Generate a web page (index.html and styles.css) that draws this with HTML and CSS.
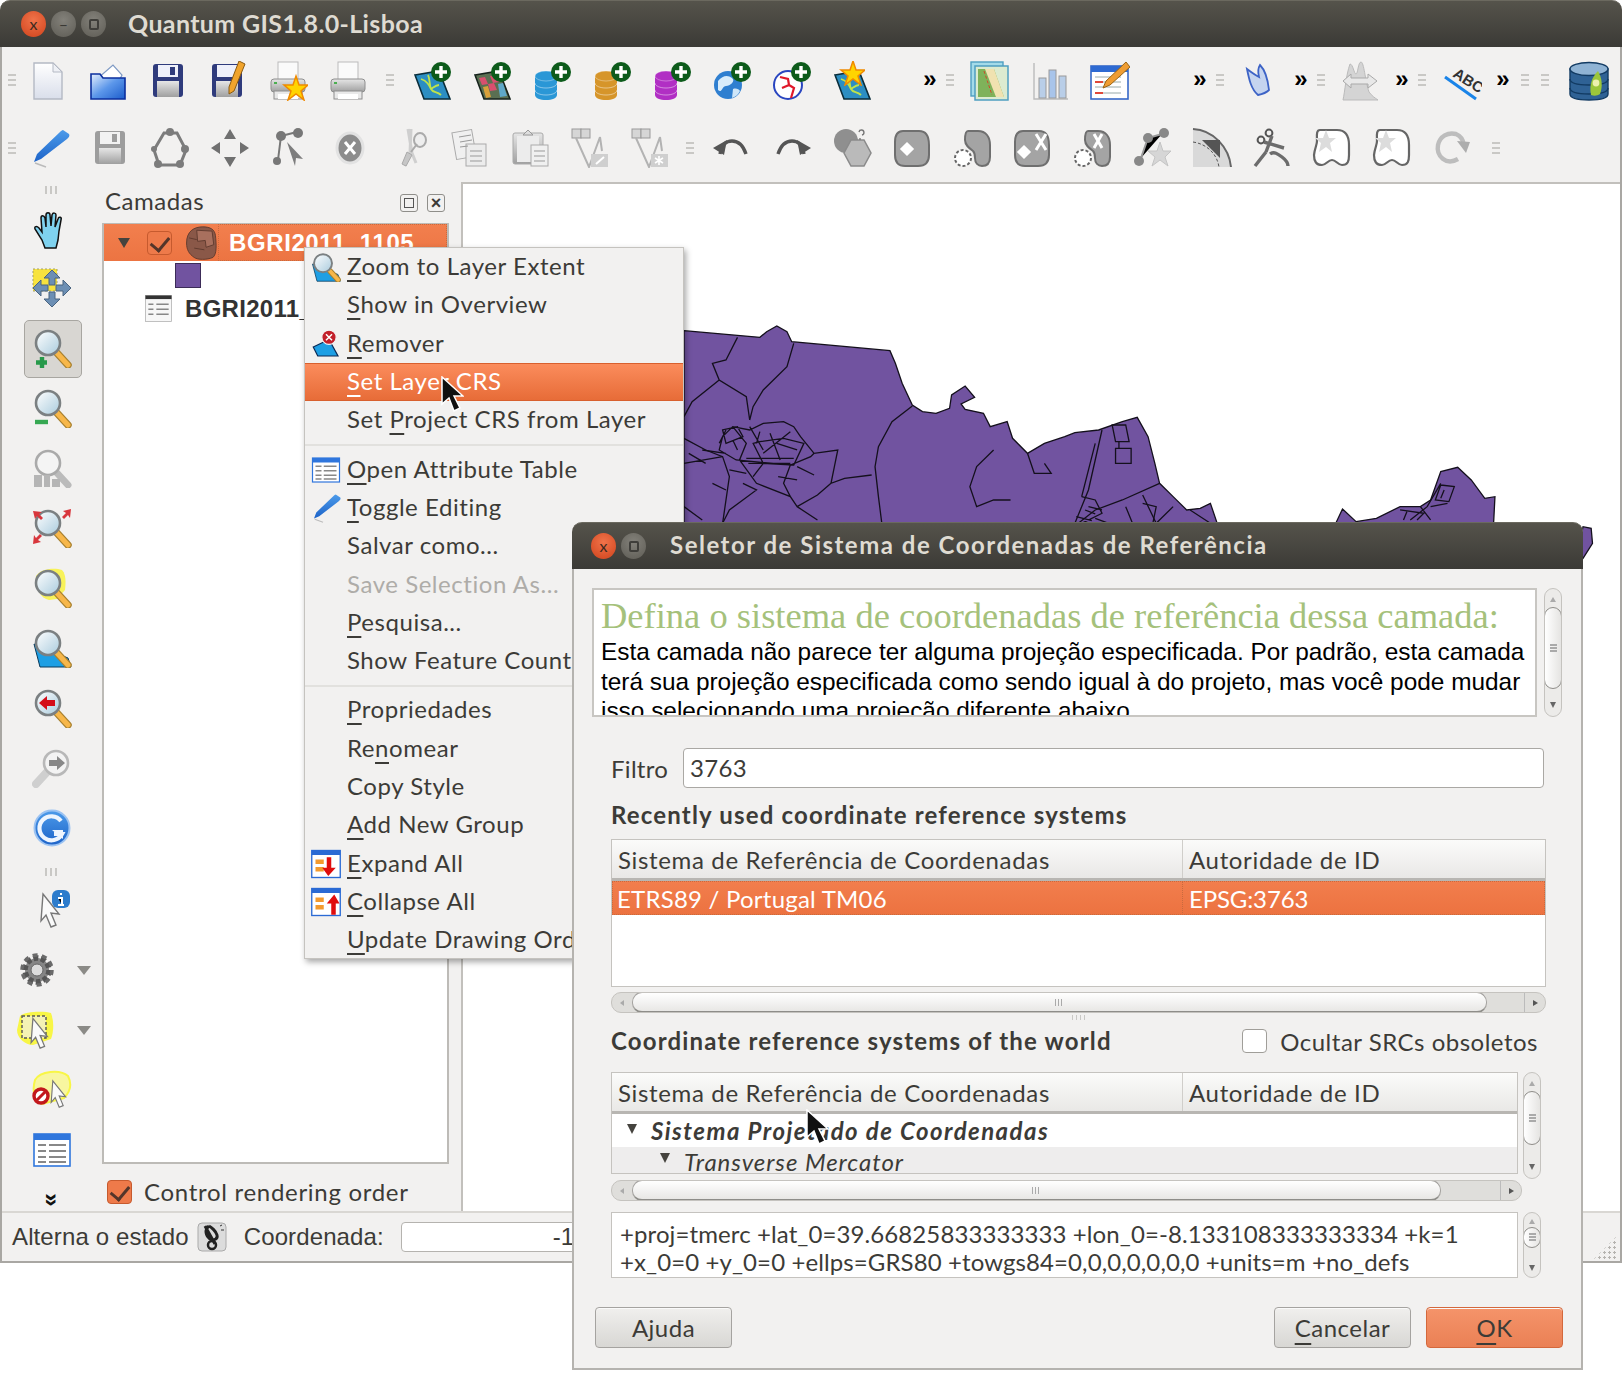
FILE: index.html
```html
<!DOCTYPE html>
<html lang="pt">
<head>
<meta charset="utf-8">
<title>Quantum GIS 1.8.0-Lisboa</title>
<link rel="stylesheet" href="styles.css">
</head>
<body>
<svg class="sprite" width="0" height="0" aria-hidden="true">
<defs>
<linearGradient id="gDoc" x1="0" y1="0" x2="0" y2="1"><stop offset="0" stop-color="#fff"/><stop offset="1" stop-color="#d9deea"/></linearGradient>
<linearGradient id="gFolder" x1="0" y1="0" x2="1" y2="1"><stop offset="0" stop-color="#e6f0fd"/><stop offset=".5" stop-color="#5c97ea"/><stop offset="1" stop-color="#1b5ccb"/></linearGradient>
<linearGradient id="gGrey" x1="0" y1="0" x2="0" y2="1"><stop offset="0" stop-color="#e6e6e6"/><stop offset="1" stop-color="#9f9f9f"/></linearGradient>
<linearGradient id="gMag" x1="0" y1="0" x2="1" y2="1"><stop offset="0" stop-color="#fff"/><stop offset="1" stop-color="#a9cbdd"/></linearGradient>
<linearGradient id="gBlue" x1="0" y1="0" x2="0" y2="1"><stop offset="0" stop-color="#4c9bea"/><stop offset="1" stop-color="#1d63c8"/></linearGradient>
<symbol id="badge" viewBox="0 0 40 40"><circle cx="29" cy="11" r="10" fill="#0d5b1b"/><path d="M29 5v12M23 11h12" stroke="#fff" stroke-width="3.4"/></symbol>
<symbol id="db" viewBox="0 0 40 40"><path d="M3 15v19c0 3 5 5 11 5s11-2 11-5V15z" fill="currentColor"/><ellipse cx="14" cy="15" rx="11" ry="5" fill="currentColor" stroke="#fff" stroke-opacity=".35"/><path d="M3 22c0 3 5 5 11 5s11-2 11-5M3 29c0 3 5 5 11 5s11-2 11-5" fill="none" stroke="#fff" stroke-opacity=".45"/></symbol>
<symbol id="mag" viewBox="0 0 40 40"><path d="M25 25l11 12" stroke="#a8812f" stroke-width="7.5" stroke-linecap="round"/><path d="M25 25l11 12" stroke="#f7b74a" stroke-width="5" stroke-linecap="round"/><circle cx="16" cy="15" r="12" fill="url(#gMag)" stroke="#7b8082" stroke-width="2.6"/></symbol>
<symbol id="magG" viewBox="0 0 40 40"><path d="M25 25l11 12" stroke="#bbb" stroke-width="7" stroke-linecap="round"/><circle cx="16" cy="15" r="12" fill="#f4f4f4" stroke="#aaa" stroke-width="2.6"/></symbol>
<symbol id="new" viewBox="0 0 40 40"><path d="M6 2h19l9 9v27H6z" fill="url(#gDoc)" stroke="#b4b9c4" stroke-width="1.4"/><path d="M25 2v9h9z" fill="#eef0f5" stroke="#b4b9c4"/></symbol>
<symbol id="open" viewBox="0 0 40 40"><path d="M9 18L25 4l9 10-3 6z" fill="#fff" stroke="#7f9ac4" stroke-width="1.2"/><path d="M3 13h9l3 4h22v21H3z" fill="url(#gFolder)" stroke="#0b2f9e" stroke-width="1.6"/></symbol>
<symbol id="save" viewBox="0 0 40 40"><rect x="5" y="3" width="30" height="33" rx="3" fill="#2f3b7c"/><rect x="10" y="4" width="20" height="12" fill="#eef0fa"/><rect x="22" y="6" width="5" height="8" fill="#2f3b7c"/><rect x="9" y="20" width="22" height="16" fill="url(#gGrey)"/></symbol>
<symbol id="saveas" viewBox="0 0 40 40"><rect x="4" y="3" width="30" height="33" rx="3" fill="#2f3b7c"/><rect x="9" y="4" width="20" height="12" fill="#eef0fa"/><rect x="8" y="20" width="22" height="16" fill="url(#gGrey)"/><path d="M31 0l6 3-11 27-5 3 0-7z" fill="#f1a42c" stroke="#8a5a10"/></symbol>
<symbol id="save2" viewBox="0 0 40 40"><rect x="5" y="3" width="30" height="33" rx="3" fill="#9d9d9d"/><rect x="10" y="4" width="20" height="12" fill="#f2f2f2"/><rect x="22" y="6" width="5" height="8" fill="#9d9d9d"/><rect x="9" y="20" width="22" height="16" fill="url(#gGrey)"/></symbol>
<symbol id="printer" viewBox="0 0 40 40"><rect x="10" y="1" width="20" height="18" fill="#fafafa" stroke="#bbb"/><rect x="3" y="18" width="34" height="13" rx="3" fill="url(#gGrey)" stroke="#8e8e8e"/><rect x="6" y="30" width="28" height="8" fill="#e9e9e9" stroke="#8e8e8e"/><rect x="10" y="33" width="20" height="5" fill="#fff"/><rect x="6" y="21" width="3" height="2" fill="#4caf50"/></symbol>
<symbol id="star" viewBox="0 0 40 40"><path d="M28 15l3 9h9l-7 6 3 9-8-6-8 6 3-9-7-6h9z" fill="#ffd400" stroke="#f08a00" stroke-width="1.5"/></symbol>
<symbol id="vec" viewBox="0 0 40 40"><path d="M3 14l24-4 11 28H12z" fill="#2c8ec2" stroke="#0a2d3a" stroke-width="1.6"/><path d="M9 18c6 2 8 6 10 10s6 2 10 6M16 14c2 4 1 8 3 14M27 24c-3 0-5 2-8 4" fill="none" stroke="#bfe34a" stroke-width="1.8"/></symbol>
<symbol id="rast" viewBox="0 0 40 40"><path d="M3 14l24-4 11 28H12z" fill="#5a6f52" stroke="#16221c" stroke-width="1.6"/><path d="M7 17l6-1 3 7-6 1zM16 23l6-1 3 7-7 1zM18 15l6-1 3 7-6 1z" fill="#d84f6e"/><path d="M11 26l5-1 3 11-5 1z" fill="#d9a13a"/><path d="M26 23l5-1 4 13-7 1z" fill="#5fa8c9"/></symbol>
<symbol id="globe" viewBox="0 0 40 40"><circle cx="16" cy="24" r="14" fill="#2f7fd0"/><path d="M6 20c5-6 10-6 14-3s-2 8-6 8-4 8-8 4z" fill="#d9ecfa"/><path d="M21 28c3-1 6 0 7 2-2 4-5 6-8 7z" fill="#cfe6f8"/></symbol>
<symbol id="globe2" viewBox="0 0 40 40"><circle cx="16" cy="24" r="14" fill="#fff" stroke="#2a46c0" stroke-width="2"/><path d="M8 16l8 2 1 6 5 3-3 10M17 24l-7 3" fill="none" stroke="#e0182a" stroke-width="2.2"/></symbol>
<symbol id="atlas" viewBox="0 0 40 40"><rect x="1" y="1" width="32" height="34" fill="#a4dbe9" stroke="#4f9fc0" stroke-width="1.4"/><rect x="5" y="5" width="33" height="34" fill="#dcebd0" stroke="#4f9fc0" stroke-width="1.5"/><path d="M8 8h16l10 28H8z" fill="#7fb25a"/><path d="M15 8h9l10 28H26z" fill="#f0e2b0"/><path d="M14 10l8 24" stroke="#cf4a2a" stroke-dasharray="3 2"/></symbol>
<symbol id="chart" viewBox="0 0 40 40"><path d="M4 2v36h34" fill="none" stroke="#bbb" stroke-width="1.4"/><rect x="9" y="17" width="7" height="20" fill="#b9cee8" stroke="#9a9a9a"/><rect x="19" y="9" width="7" height="28" fill="#a8c4ea" stroke="#9a9a9a"/><rect x="29" y="15" width="7" height="22" fill="#b9cee8" stroke="#9a9a9a"/></symbol>
<symbol id="notes" viewBox="0 0 40 40"><rect x="1" y="5" width="37" height="33" fill="#fff" stroke="#3668c8" stroke-width="1.6"/><rect x="1" y="5" width="37" height="6" fill="#2e6ad2"/><path d="M5 16h26M5 21h26M5 26h26M5 32h26" stroke="#9aa"/><path d="M5 21h8M5 32h8" stroke="#e0483a" stroke-width="2"/><path d="M36 1l4 5-20 18-7 3 3-7z" fill="#ef9d33" stroke="#9a6414"/></symbol>
<symbol id="book" viewBox="0 0 40 40"><path d="M7 8c2 10 4 20 11 26 5-1 8-2 11-5-1-9-4-20-9-25-2 3-2 8-1 12-4-2-8-5-12-8z" fill="#c5d4ef" stroke="#3d63c6" stroke-width="1.8"/></symbol>
<symbol id="hist" viewBox="0 0 40 40"><path d="M2 39C4 30 5 14 9 3c3 0 4 10 6 10s2-12 5-12c3 0 4 18 8 30 3 4 6 6 9 8z" fill="#d4d4d4" stroke="#bbb"/><path d="M2 20l8-7v4h17v-4l9 7-9 7v-4H10v4z" fill="#e8e8e8" stroke="#a9a9a9"/></symbol>
<symbol id="abc" viewBox="0 0 40 40"><text x="10" y="15" transform="rotate(33 10 15)" font-family="Liberation Sans" font-weight="700" font-size="15" fill="#333">ABC</text><path d="M3 16l31 22" stroke="#1a84e8" stroke-width="3"/></symbol>
<symbol id="qdb" viewBox="0 0 40 40"><path d="M1 8v25c0 4 8 6 19 6s19-2 19-6V8z" fill="#2f6295" stroke="#123b63" stroke-width="1.4"/><ellipse cx="20" cy="8" rx="19" ry="6.5" fill="#8fb3d4" stroke="#123b63" stroke-width="1.4"/><path d="M1 18c0 4 8 6 19 6s19-2 19-6M1 27c0 4 8 6 19 6s19-2 19-6" fill="none" stroke="#123b63" stroke-width="1.4"/><path d="M29 10c-6 6-9 14-7 24 3 1 6 1 9-1 3-8 2-16-2-23z" fill="#9cc63a"/><circle cx="27" cy="22" r="3.4" fill="#edf0ad"/></symbol>
<symbol id="edit" viewBox="0 0 40 40"><path d="M33 2l6 4c1 2 0 3-2 5L11 31l-7 3 3-8L30 4c1-1 2-2 3-2z" fill="url(#gBlue)"/><path d="M5 35l11 4" stroke="#bbb" stroke-width="1.6"/></symbol>
<symbol id="nodeshape" viewBox="0 0 40 40"><path d="M14 5h13l9 17-6 15H9L4 22z" fill="none" stroke="#7c7c7c" stroke-width="3"/><g fill="#7c7c7c"><circle cx="20" cy="4" r="4"/><circle cx="35" cy="21" r="4"/><circle cx="30" cy="36" r="4"/><circle cx="8" cy="36" r="4"/><circle cx="4" cy="21" r="3"/></g></symbol>
<symbol id="move" viewBox="0 0 40 40"><path d="M20 1l6 10H14zM20 39l-6-10h12zM1 20l9-6v12zM39 20l-9 6V14z" fill="#707070"/></symbol>
<symbol id="nodetool" viewBox="0 0 40 40"><path d="M11 8L8 32M11 8l16-4" stroke="#777" stroke-width="2"/><g fill="#777"><circle cx="11" cy="8" r="5"/><circle cx="28" cy="5" r="5"/><circle cx="7" cy="33" r="4"/></g><path d="M17 14l16 17-7-1-1 8z" fill="#7d7d7d"/></symbol>
<symbol id="del" viewBox="0 0 40 40"><ellipse cx="20" cy="20" rx="13" ry="15" fill="#8c8c8c" stroke="#e2e2e2" stroke-width="3"/><path d="M15 14l10 12M25 14L15 26" stroke="#fff" stroke-width="3"/></symbol>
<symbol id="cut" viewBox="0 0 40 40"><path d="M21 1l-1 24-5 13M18 1l4 24 4 10" fill="none" stroke="#cfcfcf" stroke-width="3"/><ellipse cx="30" cy="12" rx="6" ry="7" fill="#eee" stroke="#aaa" stroke-width="2"/><path d="M21 24l6-8" stroke="#aaa" stroke-width="2"/><path d="M17 24l-5 12 4 2 6-11z" fill="#c6c6c6" stroke="#aaa"/></symbol>
<symbol id="copy" viewBox="0 0 40 40"><rect x="4" y="3" width="20" height="27" fill="#f0f0f0" stroke="#aaa" transform="rotate(-10 14 16)"/><rect x="16" y="16" width="20" height="22" fill="#ececec" stroke="#aaa"/><path d="M9 9l12-2M10 14l12-2M10 19l8-1M20 23h12M20 28h12M20 33h12" stroke="#999"/></symbol>
<symbol id="paste" viewBox="0 0 40 40"><rect x="3" y="5" width="30" height="31" rx="2" fill="url(#gGrey)" stroke="#aaa"/><rect x="7" y="8" width="22" height="26" fill="#ececec"/><path d="M13 7l5-5 5 5z" fill="#ddd" stroke="#999"/><rect x="21" y="17" width="17" height="21" fill="#f0f0f0" stroke="#aaa"/><path d="M24 23h11M24 28h11M24 33h11" stroke="#999"/></symbol>
<symbol id="merge" viewBox="0 0 40 40"><rect x="2" y="1" width="9" height="9" fill="#d6d6d6" stroke="#999"/><rect x="11" y="1" width="9" height="9" fill="#d6d6d6" stroke="#999"/><path d="M6 10l13 29 11-30M30 9l2 14" fill="none" stroke="#b3b3b3" stroke-width="2"/><rect x="21" y="26" width="17" height="13" fill="#cfcfcf"/><path d="M26 36l8-7" stroke="#fff" stroke-width="2"/></symbol>
<symbol id="merge2" viewBox="0 0 40 40"><rect x="2" y="1" width="9" height="9" fill="#d6d6d6" stroke="#999"/><rect x="11" y="1" width="9" height="9" fill="#d6d6d6" stroke="#999"/><path d="M6 10l13 29 11-30M30 9l2 14" fill="none" stroke="#b3b3b3" stroke-width="2"/><rect x="21" y="26" width="17" height="13" fill="#cfcfcf"/><path d="M29 28v9M25 30l8 5M33 30l-8 5" stroke="#fff" stroke-width="1.6"/></symbol>
<symbol id="undo" viewBox="0 0 40 40"><path d="M8 26C10 16 14 13 20 13s11 4 14 13" fill="none" stroke="#555" stroke-width="3.4"/><path d="M1 20l14-8-3 15z" fill="#555"/></symbol>
<symbol id="redo" viewBox="0 0 40 40"><path d="M32 26C30 16 26 13 20 13S9 17 6 26" fill="none" stroke="#555" stroke-width="3.4"/><path d="M39 20l-14-8 3 15z" fill="#555"/></symbol>
<symbol id="blob" viewBox="0 0 40 40"><path d="M11 3h16c8 0 10 6 10 14v10c0 7-4 11-11 11H13C6 38 3 34 3 27V14C3 7 5 3 11 3z" fill="#a4a4a4" stroke="#6f6f6f" stroke-width="2"/></symbol>
<symbol id="multi" viewBox="0 0 40 40"><circle cx="14" cy="13" r="12" fill="#8f8f8f"/><path d="M19 12h13l7 13-7 13H19l-7-13z" fill="#bababa" stroke="#8a8a8a" stroke-width="1.5"/><path d="M27 4a2.5 2.5 0 1 1 3 3M28 10v2" fill="none" stroke="#777" stroke-width="1.4"/></symbol>
<symbol id="ring" viewBox="0 0 40 40"><use href="#blob" width="40" height="40"/><path d="M15 16l5 5-5 5-5-5z" fill="#fff" stroke="#fff" stroke-width="3"/></symbol>
<symbol id="part" viewBox="0 0 40 40"><path d="M16 3h10c8 0 12 6 12 14v12c0 6-3 9-8 9-4 0-7-3-7-8 0-3 0-5-2-7-4-3-8-6-8-11 0-6 1-9 3-9z" fill="#a4a4a4" stroke="#6f6f6f" stroke-width="2"/><circle cx="11" cy="30" r="8" fill="#fff" stroke="#666" stroke-width="2" stroke-dasharray="3 2"/></symbol>
<symbol id="delring" viewBox="0 0 40 40"><use href="#blob" width="40" height="40"/><path d="M24 6l10 16M34 6L24 22" stroke="#fff" stroke-width="3"/><path d="M12 19l5 5-5 5-5-5z" fill="#fff" stroke="#fff" stroke-width="3"/></symbol>
<symbol id="delpart" viewBox="0 0 40 40"><use href="#part" width="40" height="40"/><path d="M22 6l8 14M30 6l-8 14" stroke="#fff" stroke-width="3"/></symbol>
<symbol id="starnode" viewBox="0 0 40 40"><path d="M9 30L16 10l14-4" stroke="#999" stroke-width="2"/><g fill="#888"><circle cx="16" cy="10" r="5"/><circle cx="32" cy="5" r="5"/><circle cx="7" cy="33" r="5"/></g><path d="M28 14l3 9h8l-6 6 3 9-8-6-8 6 3-9-7-6h9z" fill="#d6d6d6" stroke="#c4c4c4"/></symbol>
<symbol id="offset" viewBox="0 0 40 40"><path d="M1 1c20 1 36 18 38 38H1z" fill="#d9d9d9"/><path d="M1 1c20 1 36 18 38 38" fill="none" stroke="#666" stroke-width="2"/><path d="M10 12L28 12v18z" fill="#555"/><path d="M1 14c14 2 24 12 26 25" fill="none" stroke="#555" stroke-dasharray="3 2"/></symbol>
<symbol id="split" viewBox="0 0 40 40"><circle cx="17" cy="5" r="3.4" fill="none" stroke="#555" stroke-width="2"/><circle cx="9" cy="12" r="3.4" fill="none" stroke="#555" stroke-width="2"/><path d="M12 14l20 6M20 8L14 24M14 24L3 38M18 26c4-3 8 0 12 3 4 3 6 6 6 9" fill="none" stroke="#6c6c6c" stroke-width="3.4"/></symbol>
<symbol id="rotstar" viewBox="0 0 40 40"><path d="M8 2h17c9 0 12 7 12 15v10c0 6-1 10-7 10-4 0-6-5-10-5s-6 5-10 5c-6 0-8-4-8-10 1-8 3-10 3-14 0-5-1-11 3-11z" fill="#fff" stroke="#666" stroke-width="2.2"/><path d="M14 2l3 8h7l-6 5 2 9-6-5-7 5 2-9-6-5h8z" fill="#dcdcdc"/></symbol>
<symbol id="rotate" viewBox="0 0 40 40"><path d="M26 31C14 38 4 28 6 17 8 8 16 4 24 6c5 2 7 5 8 11" fill="none" stroke="#bdbdbd" stroke-width="4.4"/><path d="M25 13l13 1-4 11z" fill="#adadad"/></symbol>
<symbol id="hand" viewBox="0 0 40 40"><path d="M13 38l-3-8-7-11c-1-3 2-3 4-1l3 4-1-14c0-3 3-3 4 0l1 9V5c0-3 4-3 4 0l1 11 1-11c1-3 4-2 4 0l-1 12 3-8c1-3 4-2 3 1l-2 11-1 9-2 8z" fill="#7fd2ef" stroke="#111" stroke-width="1.5"/></symbol>
<symbol id="pansel" viewBox="0 0 40 40"><rect x="1" y="1" width="24" height="22" fill="#f7e33e" stroke="#a4a067" stroke-dasharray="2 2"/><g fill="#6c8fb4" stroke="#4a6480"><path d="M20 2l8 8h-5v7h-6v-7h-5zM20 39l8-8h-5v-7h-6v7h-5z"/><path d="M1 20l8-8v5h7v6H9v5zM39 20l-8-8v5h-7v6h7v5z"/></g></symbol>
<symbol id="zin" viewBox="0 0 40 40"><use href="#mag" width="40" height="40"/><path d="M10 29v11M4 34.5h11" stroke="#26994a" stroke-width="4.4"/></symbol>
<symbol id="zout" viewBox="0 0 40 40"><use href="#mag" width="40" height="40"/><path d="M3 34h13" stroke="#36a852" stroke-width="4.4"/></symbol>
<symbol id="zfull" viewBox="0 0 40 40"><use href="#magG" width="40" height="40"/><path d="M2 27h8v12H2zM12 27h6v12h-6zM20 31h8v8h-8z" fill="#b5b5b5"/></symbol>
<symbol id="zsel" viewBox="0 0 40 40"><use href="#mag" width="40" height="40"/><path d="M1 3l9 1-3 2 4 4-2 2-4-4-2 3zM39 1l-1 9-2-3-4 4-2-2 4-4-3-2zM1 36l1-9 2 3 4-4 2 2-4 4 3 2z" fill="#d8363c"/></symbol>
<symbol id="zyel" viewBox="0 0 40 40"><path d="M4 8C8 1 22-1 30 2c4 4 4 12 3 20l-8 9-8 1C8 30 3 20 4 8z" fill="#f8f25a"/><use href="#mag" width="40" height="40"/></symbol>
<symbol id="zlay" viewBox="0 0 40 40"><path d="M2 16l34 14 3 9H8z" fill="#1e9fe4" stroke="#0a3a5a"/><use href="#mag" width="40" height="40"/></symbol>
<symbol id="zlast" viewBox="0 0 40 40"><use href="#mag" width="40" height="40"/><path d="M7 15l8-7v4h8v6h-8v4z" fill="#d40c18"/></symbol>
<symbol id="znext" viewBox="0 0 40 40"><path d="M15 24L4 36" stroke="#cfcfcf" stroke-width="8" stroke-linecap="round"/><circle cx="24" cy="15" r="12" fill="#f3f3f3" stroke="#b8b8b8" stroke-width="2.6"/><path d="M33 15l-8-7v4h-8v6h8v4z" fill="#888"/></symbol>
<symbol id="refresh" viewBox="0 0 40 40"><circle cx="20" cy="20" r="17.5" fill="url(#gBlue)" stroke="#9cc3f2" stroke-width="2"/><path d="M29 13a12 12 0 1 0 1 13h-8" fill="none" stroke="#eef5fe" stroke-width="4.2"/><path d="M20 22h11v9z" fill="#eef5fe"/></symbol>
<symbol id="arrow" viewBox="0 0 40 40"><path d="M11 6l16 20-8-1 5 12-5 2-5-12-5 6z" fill="#fafafa" stroke="#777" stroke-width="1.4"/></symbol>
<symbol id="ident" viewBox="0 0 40 40"><use href="#arrow" width="40" height="40"/><rect x="20" y="2" width="18" height="18" rx="6" fill="#2d7ccc"/><path d="M29 5v2M26 10h4v7M26 17h6" stroke="#fff" stroke-width="2"/></symbol>
<symbol id="gear" viewBox="0 0 40 40"><circle cx="20" cy="20" r="12" fill="#858585" stroke="#555" stroke-width="5.5" stroke-dasharray="5 2.5"/><circle cx="20" cy="20" r="15" fill="none" stroke="#6a6a6a" stroke-width="3.5" stroke-dasharray="5 4.4"/><circle cx="20" cy="20" r="6" fill="#dcdcdc" stroke="#666"/></symbol>
<symbol id="selrect" viewBox="0 0 40 40"><path d="M3 6C8 1 28 1 34 3c3 8 3 18 0 26l-18 6C8 35 0 28 0 20z" fill="#f8f646"/><path d="M5 6h24v22H5z" fill="#f4f2b4" stroke="#555" stroke-width="1.4" stroke-dasharray="3 2"/><g transform="translate(6 3)"><use href="#arrow" width="36" height="36"/></g></symbol>
<symbol id="desel" viewBox="0 0 40 40"><path d="M3 10C8 1 28-1 36 6c4 8 2 16-4 22L10 34C2 30 0 20 3 10z" fill="#f8f6a0" stroke="#f8f646" stroke-width="2"/><g transform="translate(12 6)"><use href="#arrow" width="32" height="32"/></g><circle cx="9" cy="26" r="7" fill="#fff" stroke="#c2181c" stroke-width="3.4"/><path d="M5 30l8-8" stroke="#c2181c" stroke-width="3"/></symbol>
<symbol id="table" viewBox="0 0 40 40"><rect x="2" y="4" width="36" height="32" fill="#fff" stroke="#2f76dd" stroke-width="1.6"/><rect x="2" y="4" width="36" height="6" fill="#2f76dd"/><path d="M6 15h8M17 15h17M6 21h8M17 21h17M6 27h8M17 27h17M6 32h8M17 32h17" stroke="#888" stroke-width="2"/></symbol>
<symbol id="ttable" viewBox="0 0 40 40"><rect x="2" y="2" width="36" height="36" fill="#f7f7f7" stroke="#aaa"/><rect x="2" y="2" width="36" height="5" fill="#333"/><path d="M6 14h7M17 14h17M6 21h7M17 21h17M6 28h7M17 28h17" stroke="#888" stroke-width="2"/></symbol>
<symbol id="lay" viewBox="0 0 40 40"><path d="M3 20C3 6 12 1 22 1c9 0 14 3 15 10 1 10 2 22-3 26-7 3-18 3-22 0C6 33 3 28 3 20z" fill="#8a5848" stroke="#5a362a"/><path d="M15 5l18 1 2 16-9 3-1-8-9 1z" fill="#a8705e" stroke="#5a362a"/><path d="M6 14l9 2M12 26l12 2" stroke="#5a362a"/></symbol>
<symbol id="remove" viewBox="0 0 40 40"><path d="M3 24L24 14l12 22H9z" fill="#1e9fe4" stroke="#0a2a55" stroke-width="1.6"/><circle cx="24" cy="11" r="9.5" fill="#c2202a" stroke="#f3f3f3" stroke-width="1.5"/><path d="M20 7l8 8M28 7l-8 8" stroke="#fff" stroke-width="2"/></symbol>
<symbol id="expand" viewBox="0 0 40 40"><rect x="1" y="2" width="38" height="36" fill="#fff" stroke="#2a6ad4" stroke-width="1.8"/><rect x="1" y="2" width="38" height="6" fill="#2a6ad4"/><rect x="6" y="14" width="11" height="6" fill="#f39a2e"/><rect x="6" y="24" width="11" height="6" fill="#f39a2e"/><path d="M27 11v14h6l-10 11-8-11h6V11z" fill="#e00d0d"/></symbol>
<symbol id="collapse" viewBox="0 0 40 40"><rect x="1" y="2" width="38" height="36" fill="#fff" stroke="#2a6ad4" stroke-width="1.8"/><rect x="1" y="2" width="38" height="6" fill="#2a6ad4"/><rect x="6" y="14" width="11" height="6" fill="#f39a2e"/><rect x="6" y="24" width="11" height="6" fill="#f39a2e"/><path d="M27 37V22h-6l10-12 7 12h-5v15z" fill="#e00d0d"/></symbol>
<symbol id="cursor" viewBox="0 0 24 36"><path d="M2 1l0 27 7-6 5 13 6-3-6-12h9z" fill="#111" stroke="#fff" stroke-width="1.5"/></symbol>
<symbol id="toggle" viewBox="0 0 30 30"><rect x="1" y="1" width="28" height="28" rx="4" fill="#dcdcdc" stroke="#aaa"/><path d="M8 4l10 18M12 4c-5 4-3 10 1 13 4 2 8 0 7-4-1-4-6-8-8-9" fill="none" stroke="#222" stroke-width="3"/><circle cx="15" cy="23" r="4" fill="none" stroke="#222" stroke-width="2.5"/><path d="M23 4l2-1M24 8l3 0" stroke="#333"/></symbol>
</defs>
</svg>

<main class="win">
  <header class="titlebar">
    <span class="wbtn close">x</span><span class="wbtn grey">–</span><span class="wbtn grey sq"><i></i></span>
    <h1 class="wtitle">Quantum GIS1.8.0-Lisboa</h1>
  </header>

  <nav class="toolbar r1">
    <span class="grip"></span>
    <span class="t"><svg class="i"><use href="#new"/></svg></span>
    <span class="t"><svg class="i"><use href="#open"/></svg></span>
    <span class="t"><svg class="i"><use href="#save"/></svg></span>
    <span class="t"><svg class="i"><use href="#saveas"/></svg></span>
    <span class="t"><svg class="i"><use href="#printer"/><use href="#star"/></svg></span>
    <span class="t"><svg class="i"><use href="#printer"/></svg></span>
    <span class="grip wide"></span>
    <span class="t"><svg class="i"><use href="#vec"/><use href="#badge"/></svg></span>
    <span class="t"><svg class="i"><use href="#rast"/><use href="#badge"/></svg></span>
    <span class="t"><svg class="i blue"><use href="#db"/><use href="#badge"/></svg></span>
    <span class="t"><svg class="i gold"><use href="#db"/><use href="#badge"/></svg></span>
    <span class="t"><svg class="i purple"><use href="#db"/><use href="#badge"/></svg></span>
    <span class="t"><svg class="i"><use href="#globe"/><use href="#badge"/></svg></span>
    <span class="t"><svg class="i"><use href="#globe2"/><use href="#badge"/></svg></span>
    <span class="t"><svg class="i"><use href="#vec"/><use href="#star" x="-7" y="-15"/></svg></span>
    <span class="chev m38">»</span><span class="grip"></span>
    <span class="t"><svg class="i"><use href="#atlas"/></svg></span>
    <span class="t"><svg class="i"><use href="#chart"/></svg></span>
    <span class="t"><svg class="i"><use href="#notes"/></svg></span>
    <span class="chev m50">»</span><span class="grip"></span>
    <span class="t"><svg class="i"><use href="#book"/></svg></span>
    <span class="chev">»</span><span class="grip"></span>
    <span class="t"><svg class="i"><use href="#hist"/></svg></span>
    <span class="chev">»</span><span class="grip"></span>
    <span class="t"><svg class="i"><use href="#abc"/></svg></span>
    <span class="chev">»</span><span class="grip two"></span><span class="grip last"></span>
    <span class="t"><svg class="i"><use href="#qdb"/></svg></span>
  </nav>

  <nav class="toolbar r2">
    <span class="grip"></span>
    <span class="t"><svg class="i"><use href="#edit"/></svg></span>
    <span class="t"><svg class="i"><use href="#save2"/></svg></span>
    <span class="t"><svg class="i"><use href="#nodeshape"/></svg></span>
    <span class="t"><svg class="i"><use href="#move"/></svg></span>
    <span class="t"><svg class="i"><use href="#nodetool"/></svg></span>
    <span class="t"><svg class="i"><use href="#del"/></svg></span>
    <span class="t"><svg class="i"><use href="#cut"/></svg></span>
    <span class="t"><svg class="i"><use href="#copy"/></svg></span>
    <span class="t"><svg class="i"><use href="#paste"/></svg></span>
    <span class="t"><svg class="i"><use href="#merge"/></svg></span>
    <span class="t"><svg class="i"><use href="#merge2"/></svg></span>
    <span class="grip mid"></span>
    <span class="t"><svg class="i"><use href="#undo"/></svg></span>
    <span class="t"><svg class="i"><use href="#redo"/></svg></span>
    <span class="t"><svg class="i"><use href="#multi"/></svg></span>
    <span class="t"><svg class="i"><use href="#ring"/></svg></span>
    <span class="t"><svg class="i"><use href="#part"/></svg></span>
    <span class="t"><svg class="i"><use href="#delring"/></svg></span>
    <span class="t"><svg class="i"><use href="#delpart"/></svg></span>
    <span class="t"><svg class="i"><use href="#starnode"/></svg></span>
    <span class="t"><svg class="i"><use href="#offset"/></svg></span>
    <span class="t"><svg class="i"><use href="#split"/></svg></span>
    <span class="t"><svg class="i"><use href="#rotstar"/></svg></span>
    <span class="t"><svg class="i"><use href="#rotstar"/></svg></span>
    <span class="t"><svg class="i"><use href="#rotate"/></svg></span>
    <span class="grip m10"></span>
  </nav>

  <div class="work">
    <aside class="sidetools">
      <span class="vgrip top"></span>
      <span class="s"><svg class="i hand"><use href="#hand"/></svg></span>
      <span class="s"><svg class="i"><use href="#pansel"/></svg></span>
      <span class="s pressed"><svg class="i"><use href="#zin"/></svg></span>
      <span class="s"><svg class="i"><use href="#zout"/></svg></span>
      <span class="s"><svg class="i"><use href="#zfull"/></svg></span>
      <span class="s"><svg class="i"><use href="#zsel"/></svg></span>
      <span class="s"><svg class="i"><use href="#zyel"/></svg></span>
      <span class="s"><svg class="i"><use href="#zlay"/></svg></span>
      <span class="s"><svg class="i"><use href="#zlast"/></svg></span>
      <span class="s"><svg class="i"><use href="#znext"/></svg></span>
      <span class="s"><svg class="i"><use href="#refresh"/></svg></span>
      <span class="vgrip mid"></span>
      <span class="s"><svg class="i"><use href="#ident"/></svg></span>
      <span class="s drop first"><svg class="i"><use href="#gear"/></svg><b class="tri-d"></b></span>
      <span class="s drop"><svg class="i"><use href="#selrect"/></svg><b class="tri-d"></b></span>
      <span class="s"><svg class="i"><use href="#desel"/></svg></span>
      <span class="s"><svg class="i"><use href="#table"/></svg></span>
      <span class="morev">»</span>
    </aside>

    <section class="panel">
      <div class="ptitle">
        <span class="ptext">Camadas</span>
        <span class="pbtn"><i></i></span>
        <span class="pbtn x">×</span>
      </div>
      <div class="tree">
        <div class="trow sel">
          <b class="tri-dark"></b>
          <span class="chk on small"></span>
          <svg class="lay"><use href="#lay"/></svg>
          <span class="lname">BGRI2011_1105</span>
        </div>
        <div class="swatch"></div>
        <div class="trow2">
          <svg class="tab"><use href="#ttable"/></svg>
          <span class="lname2">BGRI2011_</span>
        </div>
      </div>
      <label class="order"><span class="chk on"></span>Control rendering order</label>
    </section>

    <div class="map">
      <svg class="mapsvg" viewBox="461 182 1161 1030" width="1161" height="1030">
        <g transform="translate(560 310) scale(.6775 .3333)" fill="none" stroke="#14101c" stroke-width="1.3">
          <path class="ns" fill="#7153a0" d="M183 62L295 82 305 65 320 48 335 65 342 95 487 122 495 160 505 220 520 285 535 305 555 310 575 295 578 255 598 228 612 262 592 282 598 298 625 310 635 350 660 335 668 385 690 430 715 400 745 380 760 368 795 360 830 335 852 322 868 380 878 460 885 520 905 560 925 600 945 595 960 580 970 640V700H1145V640L1155 597 1175 635 1205 625 1240 590 1270 590 1285 570 1300 485 1325 472 1345 510 1365 565 1380 560 1378 640V700H1505L1510 650 1522 655 1524 700 1510 745 1500 770H183Z"/>
          <path class="ns" d="M262 82L245 150 225 160 235 210 275 260 280 330M345 100L335 170 300 240 285 290 280 330M235 210L195 275 183 320M183 385L215 420 240 440 250 500 240 640M520 288L490 335 470 410 465 470 470 560 475 640M640 420L615 470 605 530 615 590 640 570 665 570M690 430L695 460 700 490 725 490 715 460M800 360L780 540 760 640M790 400L770 560M815 345L835 345 840 395 820 395ZM825 395V415M820 415H843V460H820ZM885 520L830 570 790 600 765 640M860 555L880 640M905 590L880 640M930 600L960 640"/>
          <path class="ns" d="M240 380L255 350 280 360 300 340 330 335 345 350 355 380 375 430 410 420 405 470 400 520 420 505 460 495M240 380L235 420 260 450 340 465 370 440 375 430M255 350L275 400 265 450 290 520 340 560 350 590 380 555 400 520M285 400L300 460 345 465 360 400 330 385 295 395ZM310 370L325 450M340 365L300 430M280 350L300 420M210 420L245 430M183 460L240 440M270 520L290 540 250 600 240 640M340 465L330 520 340 560M183 590L210 630M350 590L380 630M300 460L285 500M245 360L235 400M255 390L262 420M295 365L290 400M320 400L350 420M275 445H345M278 460H340M250 480L275 490M225 520L245 540M190 430L215 460M322 500L350 510M350 470L375 495M240 360L262 350 270 380 245 400Z"/>
          <path class="ns" d="M1300 520L1280 590 1255 630M1300 525L1320 530 1312 575 1292 570ZM1240 600L1275 610 1265 630M1250 605L1245 630M1305 540L1300 565M1285 590L1310 580M1270 590L1285 630"/>
          <path class="ns" d="M770 560L790 570 800 610 770 640M780 590L800 600M790 625L810 640M860 580L880 590 875 640M775 600L790 612M762 620L785 632M835 590L845 640"/>
        </g>
      </svg>
    </div>
  </div>

  <footer class="status">
    <span class="stext">Alterna o estado</span>
    <svg class="tog"><use href="#toggle"/></svg>
    <span class="stext coord">Coordenada:</span>
    <span class="cinput">-125642,93:88713,41</span>
    <span class="sgrip"></span>
  </footer>
</main>

<div class="menu">
  <div class="mi"><svg class="mic"><use href="#zlay"/></svg><span><u>Z</u>oom to Layer Extent</span></div>
  <div class="mi"><span class="mic"></span><span><u>S</u>how in Overview</span></div>
  <div class="mi"><svg class="mic"><use href="#remove"/></svg><span><u>R</u>emover</span></div>
  <div class="mi hot"><span class="mic"></span><span><u>S</u>et Layer CRS</span></div>
  <div class="mi"><span class="mic"></span><span>Set <u>P</u>roject CRS from Layer</span></div>
  <div class="msep"></div>
  <div class="mi"><svg class="mic"><use href="#table"/></svg><span><u>O</u>pen Attribute Table</span></div>
  <div class="mi"><svg class="mic"><use href="#edit"/></svg><span><u>T</u>oggle Editing</span></div>
  <div class="mi"><span class="mic"></span><span>Salvar como...</span></div>
  <div class="mi off"><span class="mic"></span><span>Save Selection As...</span></div>
  <div class="mi"><span class="mic"></span><span><u>P</u>esquisa...</span></div>
  <div class="mi"><span class="mic"></span><span>Show Feature Count</span></div>
  <div class="msep"></div>
  <div class="mi"><span class="mic"></span><span><u>P</u>ropriedades</span></div>
  <div class="mi"><span class="mic"></span><span>Re<u>n</u>omear</span></div>
  <div class="mi"><span class="mic"></span><span>Copy Style</span></div>
  <div class="mi"><span class="mic"></span><span><u>A</u>dd New Group</span></div>
  <div class="mi"><svg class="mic"><use href="#expand"/></svg><span><u>E</u>xpand All</span></div>
  <div class="mi"><svg class="mic"><use href="#collapse"/></svg><span><u>C</u>ollapse All</span></div>
  <div class="mi"><span class="mic"></span><span><u>U</u>pdate Drawing Order</span></div>
</div>
<svg class="cur c1"><use href="#cursor"/></svg>

<div class="dialog">
  <header class="dtitle">
    <span class="wbtn close">x</span><span class="wbtn grey sq"><i></i></span>
    <h2 class="dname">Seletor de Sistema de Coordenadas de Referência</h2>
  </header>
  <div class="dbody">
    <div class="browser-row">
      <div class="browser">
        <p class="bhead">Defina o sistema de coordenadas de referência dessa camada:</p>
        <p class="btext">Esta camada não parece ter alguma projeção especificada. Por padrão, esta camada terá sua projeção especificada como sendo igual à do projeto, mas você pode mudar isso selecionando uma projeção diferente abaixo.</p>
      </div>
      <div class="vs"><b class="ar-u"></b><div class="vthumb t1"><i></i></div><b class="vfill"></b><b class="ar-d"></b></div>
    </div>
    <div class="group">
      <div class="filter"><span class="flabel">Filtro</span><span class="finput">3763</span></div>
      <h3 class="ghead">Recently used coordinate reference systems</h3>
      <div class="grid g1">
        <div class="ghdr"><span class="c1col">Sistema de Referência de Coordenadas</span><span>Autoridade de ID</span></div>
        <div class="gsel"><span class="c1col">ETRS89 / Portugal TM06</span><span class="epsg">EPSG:3763</span></div>
      </div>
      <div class="hs"><b class="ar-l"></b><div class="hthumb t1"><i></i></div><b class="hfill"></b><b class="ar-r"></b></div>
      <div class="splitgrip"></div>
      <div class="ghead2"><h3 class="ghead">Coordinate reference systems of the world</h3><label class="obs"><span class="chk"></span>Ocultar SRCs obsoletos</label></div>
      <div class="withvs tree2">
        <div class="grid g2">
          <div class="ghdr"><span class="c1col">Sistema de Referência de Coordenadas</span><span>Autoridade de ID</span></div>
          <div class="nrow n1"><b class="tri-dark"></b><span class="nt1">Sistema Projetado de Coordenadas</span></div>
          <div class="nrow n2"><b class="tri-dark"></b><span class="nt2">Transverse Mercator</span></div>
        </div>
        <div class="vs"><b class="ar-u"></b><div class="vthumb t2"><i></i></div><b class="vfill"></b><b class="ar-d"></b></div>
      </div>
      <div class="hs hs2"><b class="ar-l"></b><div class="hthumb t2"><i></i></div><b class="hfill"></b><b class="ar-r"></b></div>
      <div class="withvs proj">
        <div class="ptextbox">+proj=tmerc +lat_0=39.66825833333333 +lon_0=-8.133108333333334 +k=1<br>+x_0=0 +y_0=0 +ellps=GRS80 +towgs84=0,0,0,0,0,0,0 +units=m +no_defs</div>
        <div class="vs"><b class="ar-u"></b><div class="vthumb t3"><i></i></div><b class="vfill"></b><b class="ar-d"></b></div>
      </div>
    </div>
    <div class="buttons">
      <span class="btn">Ajuda</span>
      <span class="btn push"><u>C</u>ancelar</span>
      <span class="btn ok"><u>O</u>K</span>
    </div>
  </div>
</div>
<svg class="cur c2"><use href="#cursor"/></svg>
</body>
</html>
```
FILE: styles.css
```css
* { box-sizing: border-box; }
html, body { margin: 0; padding: 0; }
body {
  width: 1622px; height: 1394px; overflow: hidden; background: #fff;
  font-family: Lato, "Open Sans", "Liberation Sans", sans-serif;
  font-size: 24px; color: #3c3b37; position: relative;
}
.sprite { position: absolute; }
h1, h2, h3, p { margin: 0; font-weight: inherit; font-size: inherit; }
u { text-decoration-thickness: 2px; text-underline-offset: 5px; }

.blue { color: #2a97d6; } .gold { color: #d6952a; } .purple { color: #b12fc4; }

/* main window */
.win {
  width: 1622px; height: 1263px; display: flex; flex-direction: column;
  background: #f2f1f0; border-left: 2px solid #a9a7a3; border-right: 2px solid #a9a7a3; border-bottom: 2px solid #a9a7a3;
  border-radius: 10px 10px 0 0;
}
.titlebar, .dtitle {
  display: flex; align-items: center; flex: none;
  background: linear-gradient(#55534b, #3b3a36); border-top: 1px solid #6b695f;
}
.titlebar { height: 47px; margin: 0 -2px; padding-left: 21px; border-radius: 10px 10px 0 0; gap: 5px; }
.wbtn {
  width: 25px; height: 26px; border-radius: 50%; display: flex; align-items: center; justify-content: center;
  font-size: 16px; line-height: 1; color: #3c2a20;
}
.close { background: radial-gradient(circle at 50% 35%, #f0734a, #d0431c); }
.grey { background: radial-gradient(circle at 50% 35%, #83817a, #5e5c55); color: #3a3935; }
.sq i { width: 10px; height: 11px; border: 2px solid #3f3e3a; display: block; border-radius: 2px; }
.wtitle { margin: 0 0 2px 17px; color: #dfdbd2; font-size: 25px; font-weight: 700; letter-spacing: .36px; }

.toolbar { display: flex; align-items: center; flex: none; }
.r1 { height: 67px; padding-left: 4px; }
.r2 { height: 68px; padding-left: 4px; }
.t { width: 60px; display: flex; justify-content: center; flex: none; }
.i { width: 40px; height: 40px; display: block; flex: none; }
.grip {
  width: 8px; height: 13px; flex: none; margin: 0 2px;
  background: repeating-linear-gradient(#c9c8c5 0 2px, transparent 2px 5px);
}
.r2 > .grip:first-child { margin-right: 4px; }
.grip.wide { margin: 0 8px; }
.grip.mid { margin: 0 8px 0 6px; }
.chev + .grip { margin: 0 6px 0 4px; }
.chev + .grip.two { margin: 0 2px 0 6px; }
.grip.last { margin: 0 10px 0 10px; }
.grip.m10 { margin-left: 10px; }
.chev { width: 20px; flex: none; text-align: center; font: 700 24px/1 "Liberation Sans", sans-serif; color: #000; margin: -4px 2px 0 1px; }
.chev.m38 { margin-left: 38px; }
.chev.m50 { margin-left: 50px; }

.work { flex: 1; display: flex; min-height: 0; }
.sidetools { width: 100px; flex: none; display: flex; flex-direction: column; align-items: center; }
.s { width: 100px; height: 60px; flex: none; display: flex; align-items: center; justify-content: center; position: relative; }
.s.pressed::before {
  content: ""; position: absolute; left: 22px; top: 2px; width: 56px; height: 56px;
  background: #d8d6d2; border: 1.5px solid #a8a6a1; border-radius: 5px;
}
.s .i { position: relative; }
.i.hand { top: 2px; }
.s.drop { justify-content: flex-start; padding-left: 15px; }
.s.drop.first { margin-top: 2px; }
.tri-d { border-left: 7px solid transparent; border-right: 7px solid transparent; border-top: 9px solid #8b8a86; margin-left: 20px; }
.vgrip { width: 14px; flex: none; background: repeating-linear-gradient(90deg, #c9c8c5 0 2px, transparent 2px 5px) center / 100% 8px no-repeat; }
.vgrip.top { height: 16px; }
.vgrip.mid { height: 12px; margin-top: 8px; }
.morev { font: 700 24px/1 "Liberation Sans", sans-serif; color: #111; transform: rotate(90deg); margin-top: 8px; }

.panel { width: 347px; flex: none; margin-right: 12px; display: flex; flex-direction: column; }
.ptitle { height: 41px; display: flex; align-items: center; flex: none; padding-left: 3px; gap: 9px; }
.ptext { margin: 0 auto 4px 0; letter-spacing: .55px; }
.pbtn {
  width: 18px; height: 18px; border: 1.5px solid #8f8e8a; border-radius: 3px; display: flex; align-items: center; justify-content: center;
  font: 700 18px/1 "Liberation Sans", sans-serif;
}
.pbtn i { width: 10px; height: 10px; border: 1.5px solid #555; display: block; }
.pbtn.x { margin-right: 4px; }
.tree { flex: 1; background: #fff; border: 2px solid #bdbbb7; border-top-width: 1px; }
.trow { height: 37px; display: flex; align-items: center; padding-left: 14px; }
.trow.sel { background: linear-gradient(#f27f4e, #ec7442); }
.tri-dark { width: 0; height: 0; border-left: 6px solid transparent; border-right: 6px solid transparent; border-top: 10px solid #45433e; flex: none; }
.chk { width: 25px; height: 24px; border: 1.5px solid #a09e99; border-radius: 4px; background: #fff; flex: none; display: block; position: relative; }
.chk.on { background: #ee7a4a; border-color: #c65a2e; }
.chk.on::after {
  content: ""; position: absolute; left: 6px; top: 1px; width: 9px; height: 15px;
  border-right: 3px solid #53352a; border-bottom: 3px solid #53352a; transform: rotate(40deg);
}
.trow .chk { margin-left: 17px; }
.lay { width: 34px; height: 34px; margin-left: 12px; flex: none; }
.lname {
  font: 700 24px/1 "Liberation Sans", sans-serif; color: #fff; padding-left: 11px; letter-spacing: .6px;
  flex: 1; height: 100%; display: flex; align-items: center; outline: 1px dotted #c96a3e; outline-offset: -1px;
}
.swatch { width: 26px; height: 25px; margin: 2px 0 0 71px; background: #7153a0; border: 1px solid #3c2c58; }
.trow2 { display: flex; align-items: center; margin: 6px 0 0 38px; }
.tab { width: 33px; height: 29px; }
.lname2 { font: 700 24px/1 "Liberation Sans", sans-serif; color: #333; margin-left: 10px; letter-spacing: .3px; }
.order { height: 47px; flex: none; display: flex; align-items: center; padding: 8px 0 0 5px; gap: 12px; letter-spacing: .7px; }

.map { flex: 1; background: #fff; border-left: 2px solid #c2c0bc; border-top: 2px solid #c2c0bc; position: relative; overflow: hidden; }
.mapsvg { position: absolute; left: -2px; top: -2px; }
.ns { vector-effect: non-scaling-stroke; }

.status { height: 50px; flex: none; border-top: 2px solid #d9d7d3; display: flex; align-items: center; padding-left: 10px; overflow: hidden; }
.stext { font-family: "Liberation Sans", sans-serif; white-space: nowrap; letter-spacing: .12px; }
.tog { width: 30px; height: 30px; margin-left: 8px; flex: none; }
.coord { margin-left: 17px; }
.cinput {
  margin-left: 17px; width: 300px; height: 30px; flex: none; background: #fff; border: 1.5px solid #b5b3af; border-radius: 4px;
  padding-left: 151px; line-height: 27px; white-space: nowrap; overflow: hidden; font-family: "Liberation Sans", sans-serif;
}
.sgrip {
  margin-left: auto; align-self: flex-end; width: 26px; height: 26px; margin-right: 2px;
  background: radial-gradient(circle, #b5b3af 1px, transparent 1.4px) 0 0 / 5px 5px;
  clip-path: polygon(100% 0, 100% 100%, 0 100%);
}

/* context menu */
.menu {
  position: absolute; left: 304px; top: 247px; width: 380px; height: 712px; overflow: hidden;
  background: #f2f1f0; border: 1.5px solid #c5c3bf;
  box-shadow: 2px 3px 6px rgba(0,0,0,.35); letter-spacing: .55px;
}
.mi { height: 38.3px; display: flex; align-items: center; white-space: nowrap; padding: 0 0 3px 6px; }
.mic { width: 30px; height: 30px; margin: 3px 6px 0 0; flex: none; display: block; }
.mi.hot { background: linear-gradient(#fb8c5c, #e76c38); color: #fff; border-top: 1px solid #d8602e; border-bottom: 1px solid #d8602e; margin: 0 -1px; padding-left: 7px; }
.mi.off { color: #aeaca8; }
.msep { height: 2px; margin: 4.5px 0; background: #e2e1de; }

.cur { position: absolute; width: 24px; height: 36px; }
.cur.c1 { left: 440px; top: 376px; }
.cur.c2 { left: 805px; top: 1109px; }

/* dialog */
.dialog {
  position: absolute; left: 572px; top: 522px; width: 1011px; height: 848px;
  background: #f2f1f0; border: 2px solid #b5b3af; border-top: 0; border-radius: 10px 10px 0 0; display: flex; flex-direction: column;
}
.dtitle { height: 47px; margin: 0 -2px; padding-left: 19px; gap: 5px; border-radius: 10px 10px 0 0; }
.dname { margin: 0 0 3px 19px; color: #dfdbd2; font-size: 24px; font-weight: 700; letter-spacing: 1.5px; }
.dbody { flex: 1; padding: 19px 19px 0 18px; display: flex; flex-direction: column; }
.browser-row { display: flex; gap: 7px; height: 129px; flex: none; }
.browser { width: 945px; flex: none; background: #fff; border: 2px solid #c8c6c2; padding: 7px 7px 0; overflow: hidden; color: #000; font-family: "Liberation Sans", sans-serif; }
.bhead { font: 36.5px/38px "Liberation Serif", serif; color: #a5c17b; white-space: nowrap; }
.btext { font-size: 24.4px; line-height: 29.5px; margin-top: 2px; }
.vs {
  width: 18px; flex: none; border: 1.5px solid #c5c3bf; border-radius: 9px; background: #ecebe9;
  display: flex; flex-direction: column; align-items: center; overflow: hidden;
}
.ar-u, .ar-d { width: 0; height: 0; border-left: 3px solid transparent; border-right: 3px solid transparent; flex: none; }
.ar-u { border-bottom: 5px solid #aaa; margin: 8px 0 5px; }
.ar-d { border-top: 6px solid #666; margin: 6px 0 8px; }
.vfill { flex: 1; }
.vthumb { width: 18px; flex: none; border: 1.5px solid #8e8d89; border-radius: 9px; background: linear-gradient(90deg, #fff, #e5e4e2); display: flex; align-items: center; justify-content: center; }
.vthumb i { width: 7px; height: 9px; background: repeating-linear-gradient(#aaa 0 1.5px, transparent 1.5px 3px); display: block; }
.vthumb.t1 { height: 82px; }
.vthumb.t2 { height: 54px; }
.vthumb.t3 { height: 21px; }

.group { padding: 0 16px 0 19px; flex: none; }
.filter { display: flex; align-items: center; margin-top: 31px; height: 40px; }
.flabel { width: 72px; flex: none; letter-spacing: .3px; }
.finput { flex: none; width: 861px; margin-right: -12px; height: 40px; background: #fff; border: 1.5px solid #aaa8a4; border-radius: 4px; padding-left: 6px; line-height: 37px; letter-spacing: .3px; }
.ghead { font-weight: 700; letter-spacing: 1.17px; line-height: 30px; }
.group > .ghead { margin-top: 12px; margin-bottom: 9px; }
.grid { background: #fff; border: 1.5px solid #c5c3bf; overflow: hidden; }
.g1 { width: 935px; height: 148px; }
.ghdr { height: 41px; display: flex; align-items: center; background: linear-gradient(#fbfbfa, #e9e8e6); border-bottom: 3px solid #b8b6b2; letter-spacing: .66px; }
.ghdr span { padding-left: 6px; }
.c1col { width: 571px; flex: none; padding-left: 6px; height: 100%; display: flex; align-items: center; border-right: 1.5px solid #d0ceca; }
.gsel { height: 34px; display: flex; align-items: center; background: linear-gradient(#f27e4d, #ec7240); color: #fff; letter-spacing: .22px; outline: 1px dotted #c96a3e; outline-offset: -1px; }
.epsg { padding-left: 6px; letter-spacing: -.14px; }
.gsel .c1col { padding-left: 5px; border-right: 1px dotted #c96a3e; }
.hs {
  height: 21px; margin-top: 5px; width: 935px; display: flex; align-items: center; border: 1.5px solid #c5c3bf; border-radius: 10px; background: #dfdedb; overflow: hidden;
}
.hs2 { margin-top: 1px; width: 911px; }
.ar-l, .ar-r { width: 0; height: 0; border-top: 3px solid transparent; border-bottom: 3px solid transparent; flex: none; }
.ar-l { border-right: 4px solid #aaa; margin: 0 8px; }
.ar-r { border-left: 5px solid #555; margin: 0 7px 0 8px; }
.hfill { flex: 1; border-right: 1px solid #bbb; height: 100%; }
.hthumb { height: 21px; flex: none; border: 1.5px solid #a5a3a0; border-bottom: 2.5px solid #8e8d89; border-radius: 10px; background: linear-gradient(#fff, #e8e7e5); display: flex; justify-content: center; align-items: center; }
.hthumb i { width: 9px; height: 7px; background: repeating-linear-gradient(90deg, #aaa 0 1.5px, transparent 1.5px 3px); display: block; }
.hthumb.t1 { width: 855px; }
.hthumb.t2 { width: 809px; }
.splitgrip { width: 13px; height: 5px; margin: 2px auto 0; background: repeating-linear-gradient(90deg, #c9c8c5 0 1.5px, transparent 1.5px 4px); }
.ghead2 { display: flex; align-items: center; justify-content: space-between; height: 36px; margin-top: 3px; padding-right: 8px; }
.obs { display: flex; align-items: center; gap: 13px; letter-spacing: .5px; }
.withvs { display: flex; gap: 5px; }
.tree2 { height: 107px; margin-top: 13px; }
.g2 { width: 907px; height: 102px; }
.tree2 .vs { height: 107px; }
.nrow { display: flex; align-items: center; font-style: italic; }
.n1 { height: 33px; padding-left: 15px; background: #fff; font-weight: 700; letter-spacing: 1.45px; }
.n1 .tri-dark { border-left-width: 5px; border-right-width: 5px; margin-right: 14px; margin-top: -4px; }
.n2 { height: 28px; padding-left: 48px; background: #eeeded; padding-top: 1px; letter-spacing: .95px; }
.n2 .tri-dark { border-left-width: 5px; border-right-width: 5px; margin-right: 14px; margin-top: -8px; }
.proj { height: 66px; margin-top: 11px; }
.ptextbox { width: 907px; height: 66px; background: #fff; border: 1.5px solid #c5c3bf; padding: 7px 8px 0; line-height: 28px; white-space: nowrap; overflow: hidden; letter-spacing: .1px; }
.proj .vs { height: 66px; }
.proj .ar-u { margin: 6px 0 3px; }
.proj .ar-d { margin: 3px 0 6px; }
.buttons { display: flex; gap: 15px; margin-top: 29px; padding-left: 3px; }
.btn {
  width: 137px; height: 41px; display: flex; align-items: center; justify-content: center;
  border: 1.5px solid #a5a3a0; border-radius: 4px; background: linear-gradient(#f0efed, #d8d7d4); letter-spacing: .5px;
  box-shadow: inset 0 1px #fafafa; white-space: pre;
}
.btn u { text-underline-offset: 6px; }
.btn.push { margin-left: auto; }
.btn.ok { background: linear-gradient(#f5946a, #ea8055); border-color: #d4683c; margin-right: -1px; }
```
